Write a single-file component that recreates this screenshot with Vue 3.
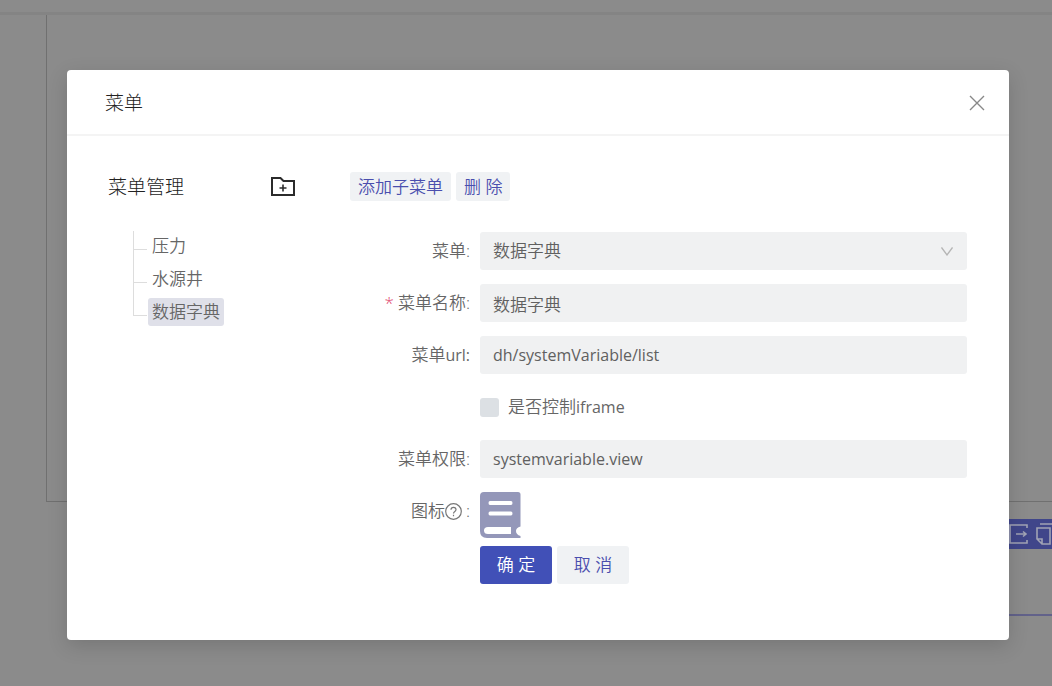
<script setup>
import { ref } from 'vue'

const nodes = ['压力', '水源井', '数据字典']
const current = ref('数据字典')
const form = ref({
  menu: '数据字典',
  name: '数据字典',
  url: 'dh/systemVariable/list',
  iframe: false,
  permission: 'systemvariable.view'
})
</script>

<template>
  <div class="screen">
    <div class="page" aria-hidden="true">
      <div class="topbar"></div>
      <div class="panel"></div>
      <div class="strip">
        <div class="tools">
          <svg width="20" height="20" viewBox="0 0 20 20" fill="none" stroke="currentColor" stroke-width="1.600">
            <path d="M18 4V1H1v18h17v-3M7 10h10M14 7.500l3 2.500-3 2.500" />
          </svg>
          <svg width="20" height="22" viewBox="0 0 20 22" fill="none" stroke="currentColor" stroke-width="1.600">
            <path d="M4 1h15M1 5h13v16H6l-5-5zM1 16h5v5" />
          </svg>
        </div>
      </div>
    </div>

    <div class="mask">
      <section class="modal" role="dialog" aria-modal="true" aria-labelledby="dialog-title">
        <header class="head">
          <h1 id="dialog-title">菜单</h1>
          <button class="close" type="button" aria-label="关闭">
            <svg width="16" height="16" viewBox="0 0 16 16" fill="none" stroke="currentColor" stroke-width="1.400">
              <path d="M1 1l14 14M15 1L1 15" />
            </svg>
          </button>
        </header>

        <div class="body">
          <aside class="side">
            <div class="side-head">
              <h2>菜单管理</h2>
              <button class="add" type="button" aria-label="添加菜单">
                <svg width="24" height="20" viewBox="0 0 24 20" fill="none" stroke="currentColor">
                  <path stroke-width="2" d="M1 1h8.500l3 3H23V18H1z" />
                  <path stroke-width="1.600" d="M12 7.500v7M8.500 11h7" />
                </svg>
              </button>
            </div>
            <ul class="tree">
              <li v-for="node in nodes" :key="node">
                <button type="button" :class="{ active: node === current }" @click="current = node">{{ node }}</button>
              </li>
            </ul>
          </aside>

          <div class="main">
            <div class="actions">
              <button class="soft small" type="button">添加子菜单</button>
              <button class="soft small" type="button">删 除</button>
            </div>

            <form class="form" @submit.prevent>
              <label for="menu">菜单:</label>
              <div class="select">
                <select id="menu" v-model="form.menu" class="field">
                  <option v-for="node in nodes" :key="node">{{ node }}</option>
                </select>
                <svg width="12" height="9" viewBox="0 0 12 9" fill="none" stroke="currentColor" stroke-width="1.300">
                  <path d="M.5 .5L6 8l5.500-7.500" />
                </svg>
              </div>

              <label for="name"><span class="star">*</span>菜单名称:</label>
              <input id="name" v-model="form.name" class="field" type="text" required>

              <label for="url">菜单<span class="latin">url:</span></label>
              <input id="url" v-model="form.url" class="field latin" type="text">

              <label class="check" for="iframe">
                <input id="iframe" v-model="form.iframe" type="checkbox">
                <span>是否控制<span class="latin">iframe</span></span>
              </label>

              <label for="permission">菜单权限:</label>
              <input id="permission" v-model="form.permission" class="field latin" type="text">

              <label for="icon">图标<svg class="help" width="17" height="17" viewBox="0 0 17 17" fill="none" stroke="currentColor" stroke-width="1.200">
                <circle cx="8.500" cy="8.500" r="7.800" />
                <path d="M6 6.800c0-3.300 5-3.300 5 0 0 1.700-2.500 1.700-2.500 3.700M8.500 11.800v1.400" />
              </svg>:</label>
              <button id="icon" class="book" type="button" aria-label="选择图标">
                <svg width="41" height="46" viewBox="0 0 41 46">
                  <path fill="#9497b9" fill-rule="evenodd" d="M4 0h34q2.500 0 2.500 2.500V34.500q-4.500 1-4.500 4.500t4.500 5v2H7q-7 0-7-7V4q0-4 4-4zM8 35q-4 0-4 3.500T8 42h23V35zM10 9q-1.500 0-1.500 2t1.500 2h21q1.500 0 1.500-2t-1.500-2zM10 19.500q-1.500 0-1.500 2t1.500 2h21q1.500 0 1.500-2t-1.500-2z" />
                </svg>
              </button>

              <div class="submit">
                <button class="primary" type="submit">确 定</button>
                <button class="soft" type="button">取 消</button>
              </div>
            </form>
          </div>
        </div>
      </section>
    </div>
  </div>
</template>

<style>
body {
  background: #8b8b8b;
}
</style>

<style scoped>
.screen {
  position: relative;
  min-height: 100vh;
  overflow: hidden;
  font: 350 17px/28px "Open Sans", "Noto Sans CJK SC", sans-serif;
  color: #666;
}
.screen * {
  box-sizing: border-box;
}
.page {
  position: absolute;
  inset: 0;
  display: flex;
  flex-direction: column;
}
.topbar {
  height: 15px;
  border-bottom: 3px solid #848484;
}
.panel {
  height: 487px;
  margin-left: 46px;
  border-left: 1px solid #707070;
  border-bottom: 1px solid #707070;
}
.strip {
  align-self: flex-end;
  width: 80px;
  height: 114px;
  padding-top: 17px;
  border-bottom: 2px solid #62628a;
}
.tools {
  display: flex;
  align-items: center;
  gap: 7px;
  height: 30px;
  padding-left: 37px;
  overflow: hidden;
  background: #40468a;
  color: #a0a3b4;
}
.tools svg {
  flex: none;
}
.mask {
  position: relative;
  padding: 70px 43px 46px 67px;
}
.modal {
  border-radius: 4px;
  background: #fff;
  box-shadow: 0 6px 20px rgba(0, 0, 0, 0.15);
}
.head {
  display: flex;
  align-items: center;
  justify-content: space-between;
  height: 66px;
  padding: 2px 24px 0 38px;
  border-bottom: 2px solid #f4f4f4;
}
h1,
h2 {
  margin: 0;
  font-size: 19px;
  font-weight: 300;
  line-height: 28px;
  color: #222;
}
button {
  margin: 0;
  padding: 0;
  border: 0;
  background: none;
  font: inherit;
  color: inherit;
  cursor: pointer;
}
button svg {
  display: block;
}
.close {
  color: #888;
}
.body {
  display: flex;
  gap: 55px;
  padding: 36px 42px 56px 41px;
}
.side {
  flex: none;
  width: 187px;
}
.side-head {
  display: flex;
  align-items: center;
  justify-content: space-between;
  height: 29px;
}
.add {
  color: #2b2b2b;
}
.tree {
  margin: 30px 0 0 25px;
  padding: 0;
  list-style: none;
}
.tree li {
  position: relative;
  height: 33px;
  padding-left: 15px;
}
.tree li::before {
  content: "";
  position: absolute;
  left: 0;
  top: 0;
  width: 13px;
  height: 18px;
  border-left: 1px solid #ddd;
  border-bottom: 1px solid #ddd;
}
.tree li:not(:last-child)::after {
  content: "";
  position: absolute;
  left: 0;
  top: 0;
  height: 100%;
  border-left: 1px solid #ddd;
}
.tree button {
  height: 28px;
  padding: 0 4px;
  margin-top: 1px;
  border-radius: 3px;
}
.tree .active {
  background: #dfe0e9;
}
.main {
  flex: 1;
  min-width: 0;
}
.actions {
  display: flex;
  gap: 5px;
}
.soft {
  border-radius: 3px;
  background: #f0f2f4;
  color: #4a4eae;
}
.small {
  height: 29px;
  padding: 0 8px;
}
.form {
  display: grid;
  grid-template-columns: 120px 1fr;
  column-gap: 10px;
  row-gap: 14px;
  margin-top: 31px;
}
.form label {
  display: flex;
  align-items: center;
  justify-content: flex-end;
  height: 38px;
  white-space: nowrap;
}
.star {
  margin-right: 4px;
  color: #e0446c;
}
.help {
  margin-right: 4px;
  color: #777;
}
.field {
  width: 100%;
  height: 38px;
  margin: 0;
  padding: 0 13px;
  border: 0;
  border-radius: 3px;
  outline: 0;
  background: #f0f1f2;
  font: inherit;
  color: #606060;
  appearance: none;
}
.latin {
  font-size: 16px;
  font-weight: 400;
}
.select {
  position: relative;
}
.select svg {
  position: absolute;
  right: 14px;
  top: 15px;
  color: #b5b5b5;
  pointer-events: none;
}
.form .check {
  grid-column: 2;
  justify-content: flex-start;
  gap: 9px;
}
.check input {
  width: 19px;
  height: 19px;
  margin: 0;
  border-radius: 3px;
  background: #dce0e4;
  appearance: none;
}
.book {
  justify-self: start;
  height: 46px;
}
.submit {
  grid-column: 2;
  display: flex;
  gap: 5px;
  margin-top: -6px;
}
.submit button {
  width: 72px;
  height: 38px;
  border-radius: 3px;
}
.submit .primary {
  background: #4150b7;
  color: #fff;
}
</style>
